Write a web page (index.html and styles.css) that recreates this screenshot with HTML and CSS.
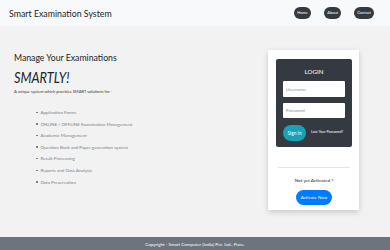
FILE: index.html
```html
<!DOCTYPE html>
<html lang="en">

<head>
    <meta charset="UTF-8">
    <meta name="viewport" content="width=device-width, initial-scale=1.0">
    <title>Smart Examination System</title>
    <link rel="stylesheet" href="styles.css">
</head>

<body>
    <nav class="navbar">
        <span class="brand">Smart Examination System</span>
        <div class="nav-links">
            <a href="#" class="nav-btn">Home</a>
            <a href="#" class="nav-btn">About</a>
            <a href="#" class="nav-btn">Contact</a>
        </div>
    </nav>

    <main class="main">
        <section class="intro">
            <h2 class="intro-title">Manage Your Examinations</h2>
            <h1 class="smartly"><span>SMARTLY!</span></h1>
            <p class="lead">A unique system which provides SMART solutions for -</p>
            <ul class="features">
                <li>Application Forms</li>
                <li>ONLINE / OFFLINE Examination Management</li>
                <li>Academic Management</li>
                <li>Question Bank and Paper generation system</li>
                <li>Result Processing</li>
                <li>Reports and Data Analysis</li>
                <li>Data Preservation</li>
            </ul>
        </section>

        <aside class="card">
            <form class="login-box">
                <h3 class="login-title">LOGIN</h3>
                <input type="text" class="field" placeholder="Username">
                <input type="password" class="field field-pass" placeholder="Password">
                <div class="login-row">
                    <button type="button" class="btn-signin">Sign In</button>
                    <a href="#" class="lost">Lost Your Password?</a>
                </div>
            </form>
            <hr class="divider">
            <p class="not-yet">Not yet Activated ?</p>
            <button type="button" class="btn-activate">Activate Now</button>
        </aside>
    </main>

    <footer class="footer">Copyright - Smart Computer (India) Pvt. Ltd., Pune.</footer>
</body>

</html>
```

FILE: styles.css
```css
/* Reset CSS */
* {
    margin: 0;
    padding: 0;
    box-sizing: border-box;
}

body {
    font-family: 'Lato', 'Open Sans', sans-serif;
    background: #f2f2f2;
    color: #212529;
    height: 250px;
    display: flex;
    flex-direction: column;
    overflow: hidden;
}

/* Navbar */
.navbar {
    height: 26px;
    background: #f8f9fa;
    display: flex;
    align-items: center;
    justify-content: space-between;
    padding: 0 16px 0 9px;
    flex-shrink: 0;
}

.brand {
    font-size: 8.8px;
    color: #212529;
}

.nav-links {
    display: flex;
    gap: 13px;
}

.nav-btn {
    background: #343a40;
    color: white;
    text-decoration: none;
    font-size: 4px;
    height: 12px;
    line-height: 12px;
    padding: 0 3px;
    border-radius: 6px;
    min-width: 17px;
    text-align: center;
}

/* Main */
.main {
    flex: 1;
    display: flex;
    padding-left: 14px;
}

.intro {
    flex: 1;
    padding-top: 26px;
}

.intro-title {
    font-size: 8.7px;
    font-weight: normal;
    line-height: 12px;
}

.smartly {
    font-size: 16px;
    font-style: italic;
    font-weight: normal;
    line-height: 18px;
    margin-top: 4px;
}

.smartly span {
    display: inline-block;
    transform: scaleX(0.8);
    transform-origin: left center;
}

.lead {
    font-size: 4.1px;
    line-height: 6px;
    margin-top: 3px;
    color: #343a40;
}

.features {
    list-style: none;
    margin-top: 12px;
    padding-left: 26px;
    color: #7a8288;
    font-size: 4.5px;
    line-height: 11.6px;
}

.features li::before {
    content: "";
    display: inline-block;
    width: 1.5px;
    height: 1.5px;
    background: #7a8288;
    margin: 0 3px 1px -4px;
    vertical-align: middle;
}

/* Login card */
.card {
    width: 91px;
    height: 160px;
    margin: 24px 31px 0 0;
    background: white;
    padding: 9px 7px 10px 8px;
    box-shadow: 0 2px 6px rgba(0, 0, 0, 0.18);
    text-align: center;
}

.login-box {
    background: #343a40;
    border-radius: 2px;
    padding: 7px 7px 6px;
    height: 88px;
}

.login-title {
    color: white;
    font-size: 6.2px;
    font-weight: normal;
    line-height: 11px;
}

.field {
    display: block;
    width: 100%;
    height: 16px;
    margin-top: 4px;
    border: none;
    border-radius: 1px;
    padding: 0 3px;
    font-family: inherit;
    font-size: 4.5px;
    color: #495057;
    background: white;
}

.field::placeholder {
    color: #8a9096;
}

.field-pass {
    margin-top: 6px;
    height: 15px;
}

.login-row {
    display: flex;
    align-items: center;
    gap: 5px;
    margin-top: 7px;
}

.btn-signin {
    background: #17a2b8;
    color: white;
    border: none;
    font-family: inherit;
    font-size: 4.8px;
    width: 23px;
    height: 16px;
    border-radius: 8px;
}

.lost {
    color: white;
    text-decoration: none;
    font-size: 3.6px;
    margin-bottom: 3px;
}

.divider {
    border: none;
    border-top: 1px solid #e5e5e5;
    margin: 20px 2px 0;
}

.not-yet {
    font-size: 4.6px;
    line-height: 6px;
    margin-top: 9px;
}

.btn-activate {
    background: #007bff;
    color: white;
    border: none;
    font-family: inherit;
    font-size: 4.4px;
    width: 36px;
    height: 15px;
    border-radius: 8px;
    margin-top: 3px;
}

/* Footer */
.footer {
    height: 13px;
    flex-shrink: 0;
    background: #6c757d;
    color: white;
    font-size: 4.5px;
    text-align: center;
    padding-top: 5px;
}
```
